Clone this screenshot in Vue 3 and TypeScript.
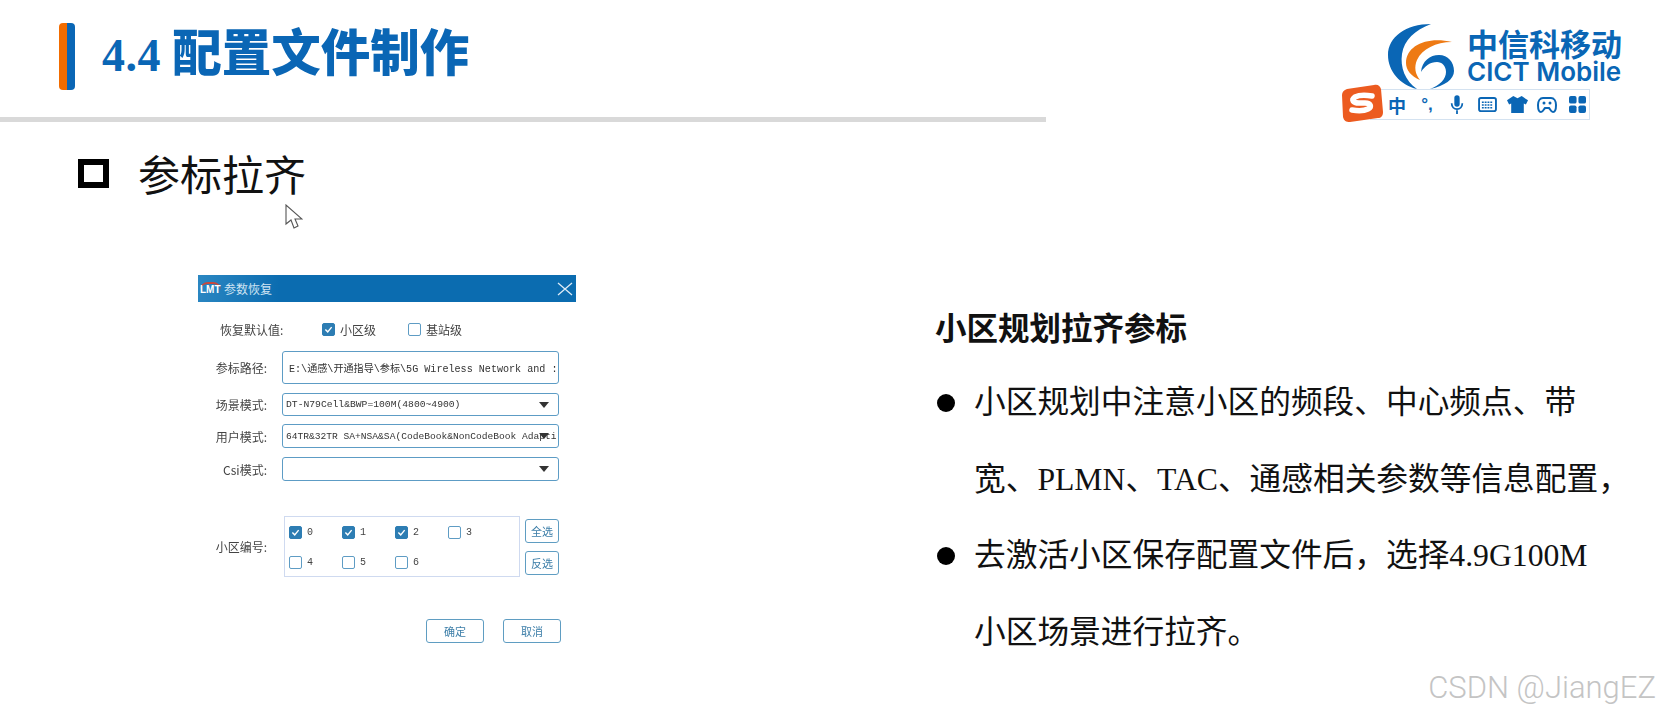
<script setup lang="ts">
interface Cell { id: number; on: boolean }
interface Field { label: string; value: string; kind: string }

const fields: Field[] = [
  { label: '参标路径:', value: 'E:\\通感\\开通指导\\参标\\5G Wireless Network and :', kind: 'path' },
  { label: '场景模式:', value: 'DT-N79Cell&BWP=100M(4800~4900)', kind: 'scene' },
  { label: '用户模式:', value: '64TR&32TR SA+NSA&SA(CodeBook&NonCodeBook Adapti', kind: 'user' },
  { label: 'Csi模式:', value: '', kind: 'csi' },
]
const cells: Cell[] = [0, 1, 2, 3, 4, 5, 6].map((id) => ({ id, on: id < 3 }))
const comma = '\uFF0C'
</script>

<template>
  <div class="slide">
    <header class="top">
      <div class="title-wrap">
        <span class="accent"><i class="orange"></i><i class="blue"></i></span>
        <h1 class="title"><span class="num">4.4</span> 配置文件制作</h1>
      </div>
      <div class="brand">
        <svg class="logo" viewBox="0 0 66 66" width="66" height="66">
          <path fill="#0a66b5" d="M43 1C18 1 0 14 0 32c0 16 12 30 29 34C17 58 12 44 14 31 16 17 27 7 43 1z" />
          <path fill="#ee7a14" d="M64 19C40 13 18 22 18 40c0 7 5 13 14 17-5-6-6-13-3-20 5-11 19-18 35-18z" />
          <path fill="#0a66b5" d="M33 49c1-11 9-17 18-17 9 0 15 7 15 16 0 8-9 15-24 18 10-4 16-10 16-17 0-6-4-10-9-10-7 0-12 4-16 10z" />
        </svg>
        <div class="brand-text">
          <div class="brand-cn">中信科移动</div>
          <div class="brand-en">CICT Mobile</div>
        </div>
      </div>
    </header>
    <div class="rule"></div>

    <div class="sub"><span class="square"></span><h2 class="sub-text">参标拉齐</h2></div>

    <main class="columns">
      <section class="dialog">
        <div class="bar">
          <span class="bar-logo">LMT</span>
          <span class="bar-title">参数恢复</span>
          <svg class="bar-x" viewBox="0 0 16 14" width="16" height="14">
            <path d="M1 1l14 12M15 1L1 13" stroke="#dcebf6" stroke-width="1.3" fill="none" />
          </svg>
        </div>
        <div class="form">
          <div class="row level">
            <span class="level-label">恢复默认值:</span>
            <span class="box on first"><svg viewBox="0 0 14 14"><path d="M3 7l3 3 5-6" /></svg></span>
            <span class="level-text">小区级</span>
            <span class="box second"></span>
            <span class="level-text">基站级</span>
          </div>
          <div v-for="f in fields" :key="f.kind" class="row field" :class="f.kind">
            <span class="label">{{ f.label }}</span>
            <div class="control">
              <span class="value">{{ f.value }}</span>
              <span v-if="f.kind !== 'path'" class="arrow"></span>
            </div>
          </div>
          <div class="row cells-row">
            <span class="label">小区编号:</span>
            <div class="cells">
              <div v-for="c in cells" :key="c.id" class="cell">
                <span class="box" :class="{ on: c.on }">
                  <svg v-if="c.on" viewBox="0 0 14 14"><path d="M3 7l3 3 5-6" /></svg>
                </span>
                <span class="cell-num">{{ c.id }}</span>
              </div>
            </div>
            <div class="side">
              <button class="btn">全选</button>
              <button class="btn">反选</button>
            </div>
          </div>
          <div class="foot">
            <button class="btn wide">确定</button>
            <button class="btn wide">取消</button>
          </div>
        </div>
      </section>

      <section class="notes">
        <h3 class="notes-title">小区规划拉齐参标</h3>
        <ul class="list">
          <li class="item">小区规划中注意小区的频段、中心频点、带<br />宽、PLMN、TAC、通感相关参数等信息配置{{ comma }}</li>
          <li class="item">去激活小区保存配置文件后{{ comma }}选择4.9G100M<br />小区场景进行拉齐。</li>
        </ul>
      </section>
    </main>

    <div class="ime">
      <svg class="ime-s" viewBox="0 0 42 38" width="42" height="38">
        <path fill="#ec5b20" d="M6 5l27-4c4-1 6 1 7 4l2 23c0 4-2 6-5 6L9 38c-4 0-6-1-7-5L1 11c0-3 2-5 5-6z" />
        <path fill="none" stroke="#fff" stroke-width="5.5" stroke-linecap="round" d="M31 12c-6-1-13-1-17 1-4 3-2 6 4 6h6c6 0 7 4 3 6-4 2-10 2-16 1" />
      </svg>
      <span class="ime-item zh">中</span>
      <span class="ime-item punct">°,</span>
      <span class="ime-item">
        <svg viewBox="0 0 18 24" width="16" height="22"><rect x="6" y="1" width="6" height="13" rx="3" fill="#0a66b5" /><path d="M3 10c0 9 12 9 12 0M9 18v4" stroke="#0a66b5" stroke-width="2" fill="none" /></svg>
      </span>
      <span class="ime-item">
        <svg viewBox="0 0 20 16" width="19" height="15"><rect x="1" y="1" width="18" height="14" rx="2" fill="none" stroke="#0a66b5" stroke-width="2" /><path d="M4 5.5h12M4 8.5h12M4 11.5h12" stroke="#0a66b5" stroke-width="1.6" stroke-dasharray="2 1" /></svg>
      </span>
      <span class="ime-item">
        <svg viewBox="0 0 20 18" width="21" height="19"><path fill="#0a66b5" d="M6 1l4 2 4-2 6 4-2 4-2-1v9H4V8L2 9 0 5z" /></svg>
      </span>
      <span class="ime-item">
        <svg viewBox="0 0 20 18" width="20" height="18"><path fill="none" stroke="#0a66b5" stroke-width="2" d="M6 2h8c3 0 5 3 5 7 0 4-1 7-3 7s-3-3-4-4H8c-1 1-2 4-4 4s-3-3-3-7 2-7 5-7z" /><circle cx="7" cy="7" r="1.5" fill="#0a66b5" /><circle cx="13" cy="7" r="1.5" fill="#0a66b5" /></svg>
      </span>
      <span class="ime-item">
        <svg viewBox="0 0 18 18" width="17" height="17"><rect x="0" y="0" width="8" height="8" rx="2" fill="#0a66b5" /><rect x="10" y="0" width="8" height="8" rx="2" fill="#0a66b5" /><rect x="0" y="10" width="8" height="8" rx="2" fill="#0a66b5" /><rect x="10" y="10" width="8" height="8" rx="2" fill="#0a66b5" /></svg>
      </span>
    </div>

    <svg class="cursor" viewBox="0 0 18 26" width="18" height="26">
      <path d="M1 1v19l5-4 3 8 4-2-3-7h7z" fill="#fff" stroke="#555" stroke-width="1.1" />
    </svg>

    <div class="mark">CSDN @JiangEZ</div>
  </div>
</template>

<style scoped>
.slide {
  position: relative;
  width: 1660px;
  height: 718px;
  overflow: hidden;
  background: #fff;
  font-family: "Noto Sans CJK SC", "Liberation Sans", sans-serif;
  color: #111;
}
.top {
  height: 117px;
  display: flex;
  justify-content: space-between;
  box-sizing: border-box;
  padding: 23px 38px 0 59px;
}
.title-wrap { display: flex; align-items: flex-start; }
.accent { display: flex; width: 16px; height: 67px; border-radius: 4px; overflow: hidden; }
.accent i { display: block; width: 8px; }
.orange { background: #f26c00; }
.blue { background: #0a66b5; }
.title {
  margin: -3px 0 0 27px;
  font-size: 49.5px;
  line-height: 60px;
  font-weight: 900;
  color: #0a66b5;
  white-space: nowrap;
}
.num { font-family: "Liberation Serif", serif; font-size: 46px; font-weight: 700; letter-spacing: 0.5px; }
.brand { display: flex; align-items: flex-start; gap: 13px; }
.logo { display: block; }
.brand-text { padding-top: 5px; color: #0a66b5; }
.brand-cn { font-size: 31px; line-height: 30px; font-weight: 700; white-space: nowrap; }
.brand-en {
  font-family: Inter, "Liberation Sans", sans-serif;
  font-size: 26px;
  line-height: 28px;
  font-weight: 600;
  white-space: nowrap;
}
.rule { width: 1046px; height: 5px; background: #d9d9d9; }

.sub { display: flex; align-items: center; height: 64px; margin-top: 19px; padding-left: 78px; }
.square { width: 31px; height: 29px; border: 6px solid #000; box-sizing: border-box; }
.sub-text { margin: 0 0 0 29px; font-size: 42px; line-height: 64px; font-weight: 400; white-space: nowrap; }

.columns {
  display: grid;
  grid-template-columns: 378px 1fr;
  column-gap: 359px;
  padding-left: 198px;
  margin-top: 70px;
}
.dialog { width: 378px; filter: blur(0.5px); color: #444; }
.bar {
  height: 27px;
  display: flex;
  align-items: center;
  background: linear-gradient(100deg, #2b87c2 0, #0b6cb0 22%, #0b6cb0 100%);
  color: #cfe4f3;
  padding: 0 2px;
  font-size: 12px;
}
.bar-logo {
  font: 700 10px "Liberation Sans", sans-serif;
  color: #fff;
  width: 21px;
  border-top: 2px solid #c9483c;
  border-radius: 8px 8px 0 0;
}
.bar-title { margin-left: 3px; }
.bar-x { margin-left: auto; margin-right: 1px; }
.form {
  padding: 16px 17px 0 0;
  font-size: 12px;
}
.row { display: flex; align-items: center; }
.level { height: 22px; }
.level-label { margin-left: 22px; width: 65px; white-space: nowrap; }
.level-text { margin-left: 5px; width: 35px; white-space: nowrap; }
.box {
  display: block;
  width: 13px;
  height: 13px;
  box-sizing: border-box;
  flex: none;
  border: 1px solid #5e9cc4;
  border-radius: 2px;
  background: #fff;
}
.box.on { background: #2d7db3; border-color: #2d7db3; }
.box svg { display: block; width: 100%; height: 100%; }
.box path { fill: none; stroke: #fff; stroke-width: 1.8; }
.first { margin-left: 37px; }
.second { margin-left: 33px; }
.label { width: 69px; text-align: right; white-space: nowrap; flex: none; }
.control {
  position: relative;
  width: 277px;
  height: 100%;
  margin-left: 15px;
  box-sizing: border-box;
  border: 1px solid #5d9cc5;
  border-radius: 3px;
  display: flex;
  align-items: center;
  overflow: hidden;
  padding-left: 5px;
  white-space: nowrap;
}
.value { font-family: "Liberation Mono", "Noto Sans CJK SC", monospace; font-size: 9.7px; color: #333; }
.arrow {
  position: absolute;
  right: 9px;
  top: 50%;
  margin-top: -3px;
  border-left: 5px solid transparent;
  border-right: 5px solid transparent;
  border-top: 6px solid #333;
}
.field.path { height: 33px; margin-top: 11px; }
.field.path .control { padding-left: 6px; }
.field.path .value { font-size: 10.1px; }
.field.scene { height: 23px; margin-top: 9px; }
.field.scene .control { padding-left: 3px; }
.field.user { height: 24px; margin-top: 8px; }
.field.user .control { padding-left: 3px; }
.field.user .value { font-size: 9.6px; }
.field.csi { height: 24px; margin-top: 9px; }
.cells-row { margin-top: 35px; height: 61px; }
.cells {
  width: 236px;
  height: 61px;
  margin-left: 17px;
  box-sizing: border-box;
  border: 1px solid #cfdaf0;
  padding: 8px 0 0 4px;
  display: grid;
  grid-template-columns: repeat(4, 53px);
  grid-auto-rows: 14px;
  row-gap: 16px;
}
.cell { display: flex; align-items: center; }
.cell-num { margin-left: 5px; font: 10px "Liberation Mono", monospace; }
.side { margin-left: 5px; display: flex; flex-direction: column; gap: 8px; }
.btn {
  width: 34px;
  height: 24px;
  padding: 0;
  background: #fff;
  border: 1px solid #5f9dc2;
  border-radius: 3px;
  color: #3c7ea8;
  font: 11px "Noto Sans CJK SC", sans-serif;
}
.foot {
  display: flex;
  justify-content: flex-end;
  gap: 19px;
  margin: 42px -2px 0 0;
}
.btn.wide { width: 58px; }

.notes { padding-top: 31px; }
.notes-title { margin: 0; font-size: 31.5px; line-height: 40px; font-weight: 700; white-space: nowrap; }
.list { list-style: none; margin: 19px 0 0; padding: 0; }
.item {
  position: relative;
  padding-left: 39px;
  font-family: "Liberation Serif", "Noto Sans CJK SC", serif;
  font-size: 31.7px;
  line-height: 76.5px;
  white-space: nowrap;
}
.item::before {
  content: "";
  position: absolute;
  left: 2px;
  top: 29px;
  width: 18px;
  height: 18px;
  border-radius: 50%;
  background: #000;
}

.ime {
  position: absolute;
  left: 1370px;
  top: 89px;
  width: 220px;
  height: 31px;
  box-sizing: border-box;
  border: 1px solid #d4e2f0;
  background: #fff;
  padding-left: 11px;
  display: flex;
  align-items: center;
}
.ime-s { position: absolute; left: -30px; top: -6px; }
.ime-item {
  width: 30px;
  flex: none;
  display: flex;
  justify-content: center;
  align-items: center;
  color: #0a66b5;
  font-weight: 700;
}
.zh { font-size: 18px; }
.punct { font-size: 17px; font-family: "Liberation Sans", sans-serif; }
.cursor { position: absolute; left: 285px; top: 204px; }
.mark {
  position: absolute;
  right: 4px;
  top: 670px;
  font-family: Roboto, "Liberation Sans", sans-serif;
  font-size: 31px;
  line-height: 36px;
  font-weight: 300;
  color: #c4c4c4;
  white-space: nowrap;
}
</style>
